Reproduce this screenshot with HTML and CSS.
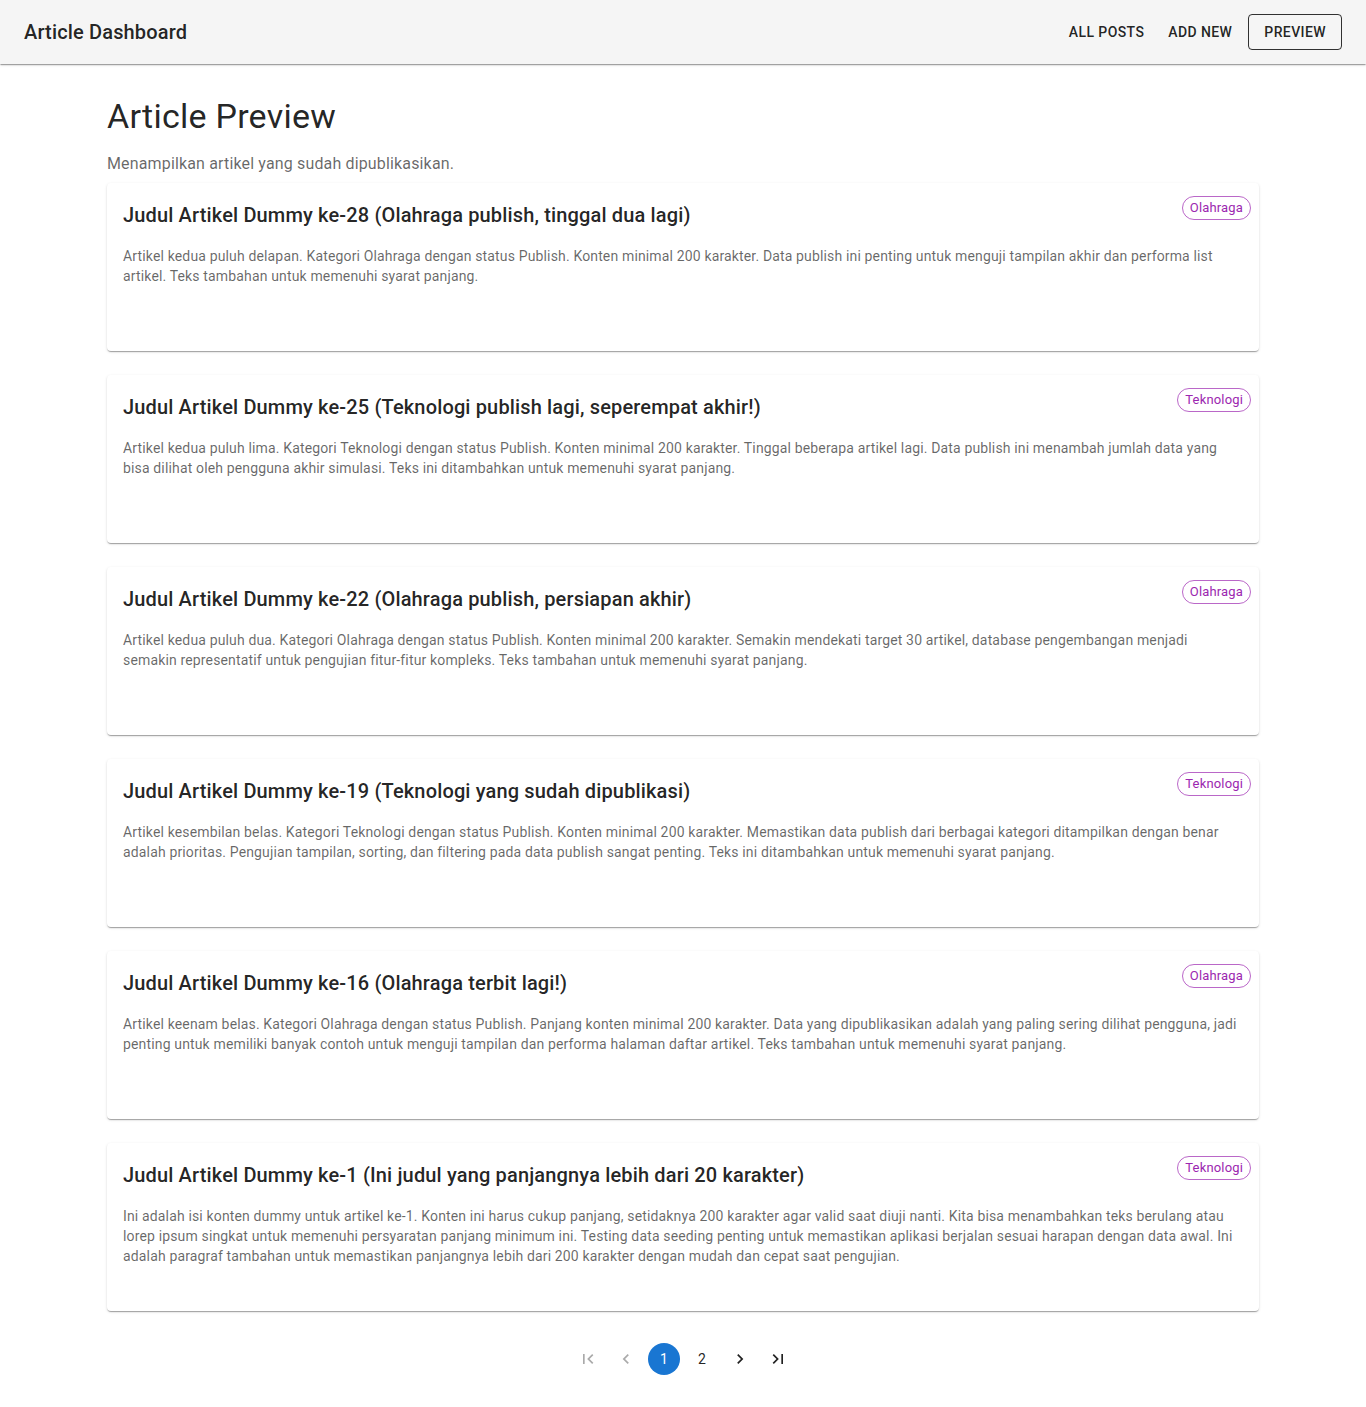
FILE: index.html
```html
<!DOCTYPE html>
<html lang="id">
<head>
<meta charset="utf-8">
<title>Article Dashboard</title>
<link rel="stylesheet" href="styles.css">
</head>
<body>
<header class="appbar">
  <div class="toolbar">
    <div class="brand">Article Dashboard</div>
    <nav class="nav">
      <a class="btn">All Posts</a>
      <a class="btn">Add New</a>
      <a class="btn btn-outlined">Preview</a>
    </nav>
  </div>
</header>
<main class="container">
  <h1 class="page-title">Article Preview</h1>
  <p class="subtitle">Menampilkan artikel yang sudah dipublikasikan.</p>

  <div class="list">
    <article class="card">
      <span class="chip">Olahraga</span>
      <h2 class="card-title">Judul Artikel Dummy ke-28 (Olahraga publish, tinggal dua lagi)</h2>
      <p class="card-text">Artikel kedua puluh delapan. Kategori Olahraga dengan status Publish. Konten minimal 200 karakter. Data publish ini penting untuk menguji tampilan akhir dan performa list artikel. Teks tambahan untuk memenuhi syarat panjang.</p>
    </article>
    <article class="card">
      <span class="chip">Teknologi</span>
      <h2 class="card-title">Judul Artikel Dummy ke-25 (Teknologi publish lagi, seperempat akhir!)</h2>
      <p class="card-text">Artikel kedua puluh lima. Kategori Teknologi dengan status Publish. Konten minimal 200 karakter. Tinggal beberapa artikel lagi. Data publish ini menambah jumlah data yang bisa dilihat oleh pengguna akhir simulasi. Teks ini ditambahkan untuk memenuhi syarat panjang.</p>
    </article>
    <article class="card">
      <span class="chip">Olahraga</span>
      <h2 class="card-title">Judul Artikel Dummy ke-22 (Olahraga publish, persiapan akhir)</h2>
      <p class="card-text">Artikel kedua puluh dua. Kategori Olahraga dengan status Publish. Konten minimal 200 karakter. Semakin mendekati target 30 artikel, database pengembangan menjadi semakin representatif untuk pengujian fitur-fitur kompleks. Teks tambahan untuk memenuhi syarat panjang.</p>
    </article>
    <article class="card">
      <span class="chip">Teknologi</span>
      <h2 class="card-title">Judul Artikel Dummy ke-19 (Teknologi yang sudah dipublikasi)</h2>
      <p class="card-text">Artikel kesembilan belas. Kategori Teknologi dengan status Publish. Konten minimal 200 karakter. Memastikan data publish dari berbagai kategori ditampilkan dengan benar adalah prioritas. Pengujian tampilan, sorting, dan filtering pada data publish sangat penting. Teks ini ditambahkan untuk memenuhi syarat panjang.</p>
    </article>
    <article class="card">
      <span class="chip">Olahraga</span>
      <h2 class="card-title">Judul Artikel Dummy ke-16 (Olahraga terbit lagi!)</h2>
      <p class="card-text">Artikel keenam belas. Kategori Olahraga dengan status Publish. Panjang konten minimal 200 karakter. Data yang dipublikasikan adalah yang paling sering dilihat pengguna, jadi penting untuk memiliki banyak contoh untuk menguji tampilan dan performa halaman daftar artikel. Teks tambahan untuk memenuhi syarat panjang.</p>
    </article>
    <article class="card">
      <span class="chip">Teknologi</span>
      <h2 class="card-title">Judul Artikel Dummy ke-1 (Ini judul yang panjangnya lebih dari 20 karakter)</h2>
      <p class="card-text">Ini adalah isi konten dummy untuk artikel ke-1. Konten ini harus cukup panjang, setidaknya 200 karakter agar valid saat diuji nanti. Kita bisa menambahkan teks berulang atau lorep ipsum singkat untuk memenuhi persyaratan panjang minimum ini. Testing data seeding penting untuk memastikan aplikasi berjalan sesuai harapan dengan data awal. Ini adalah paragraf tambahan untuk memastikan panjangnya lebih dari 200 karakter dengan mudah dan cepat saat pengujian.</p>
    </article>
  </div>

  <nav class="pagination">
    <span class="page-btn disabled"><svg viewBox="0 0 24 24"><path d="M18.41 16.59L13.82 12l4.59-4.59L17 6l-6 6 6 6zM6 6h2v12H6z"/></svg></span>
    <span class="page-btn disabled"><svg viewBox="0 0 24 24"><path d="M15.41 7.41L14 6l-6 6 6 6 1.41-1.41L10.83 12z"/></svg></span>
    <span class="page-btn selected">1</span>
    <span class="page-btn">2</span>
    <span class="page-btn"><svg viewBox="0 0 24 24"><path d="M10 6L8.59 7.41 13.17 12l-4.58 4.59L10 18l6-6z"/></svg></span>
    <span class="page-btn"><svg viewBox="0 0 24 24"><path d="M5.59 7.41L10.18 12l-4.59 4.59L7 18l6-6-6-6zM16 6h2v12h-2z"/></svg></span>
  </nav>
</main>
</body>
</html>
```

FILE: styles.css
```css
* { box-sizing: border-box; }
html, body { margin: 0; padding: 0; }
body {
  font-family: Roboto, "Liberation Sans", Arial, sans-serif;
  color: rgba(0, 0, 0, 0.87);
  background: #fff;
  -webkit-font-smoothing: antialiased;
}

.appbar {
  background: #f5f5f5;
  box-shadow: 0 2px 1px -1px rgba(0,0,0,0.2), 0 1px 1px 0 rgba(0,0,0,0.14), 0 1px 3px 0 rgba(0,0,0,0.12);
  position: relative;
  z-index: 1;
}
.toolbar {
  height: 64px;
  padding: 0 24px;
  display: flex;
  align-items: center;
}
.brand {
  flex: 1;
  font-size: 20px;
  font-weight: 500;
  letter-spacing: 0.15px;
  line-height: 1.6;
}
.nav { display: flex; align-items: center; }
.btn {
  display: inline-flex;
  align-items: center;
  justify-content: center;
  height: 36.5px;
  padding: 6px 8px;
  margin-left: 8px;
  font-size: 14px;
  font-weight: 500;
  letter-spacing: 0.4px;
  text-transform: uppercase;
  line-height: 1.75;
  border-radius: 4px;
  color: rgba(0, 0, 0, 0.87);
  cursor: pointer;
}
.btn-outlined {
  border: 1px solid rgba(0, 0, 0, 0.8);
  padding: 5px 15px;
}

.container {
  max-width: 1200px;
  margin: 0 auto;
  padding: 0 24px 32px;
}
.page-title {
  margin: 32px 0 14px;
  font-size: 34px;
  font-weight: 400;
  line-height: 1.235;
  letter-spacing: 0.25px;
}
.subtitle {
  margin: 0 0 7px;
  font-size: 16px;
  line-height: 1.5;
  letter-spacing: 0.15px;
  color: rgba(0, 0, 0, 0.6);
}

.list { display: flex; flex-direction: column; gap: 24px; }
.card {
  position: relative;
  height: 168px;
  padding: 16px;
  background: #fff;
  border-radius: 4px;
  box-shadow: 0 2px 1px -1px rgba(0,0,0,0.2), 0 1px 1px 0 rgba(0,0,0,0.14), 0 1px 3px 0 rgba(0,0,0,0.12);
}
.chip {
  position: absolute;
  top: 13px;
  right: 8px;
  height: 24px;
  padding: 0 7px;
  display: inline-flex;
  align-items: center;
  border: 1px solid rgba(156, 39, 176, 0.7);
  border-radius: 12px;
  color: #9c27b0;
  font-size: 13px;
  line-height: 1;
  letter-spacing: 0.16px;
}
.card-title {
  margin: 0 0 15px;
  font-size: 20px;
  font-weight: 500;
  line-height: 1.6;
  letter-spacing: 0.15px;
}
.card-text {
  margin: 0;
  font-size: 14px;
  line-height: 1.43;
  letter-spacing: 0.15px;
  color: rgba(0, 0, 0, 0.6);
}

.pagination {
  margin-top: 32px;
  display: flex;
  justify-content: center;
  align-items: center;
}
.page-btn {
  width: 32px;
  height: 32px;
  margin: 0 3px;
  border-radius: 16px;
  display: inline-flex;
  align-items: center;
  justify-content: center;
  font-size: 14px;
  color: rgba(0, 0, 0, 0.87);
  letter-spacing: 0.15px;
}
.page-btn svg { width: 20px; height: 20px; fill: currentColor; }
.page-btn.disabled { opacity: 0.38; }
.page-btn.selected { background: #1976d2; color: #fff; }
```
